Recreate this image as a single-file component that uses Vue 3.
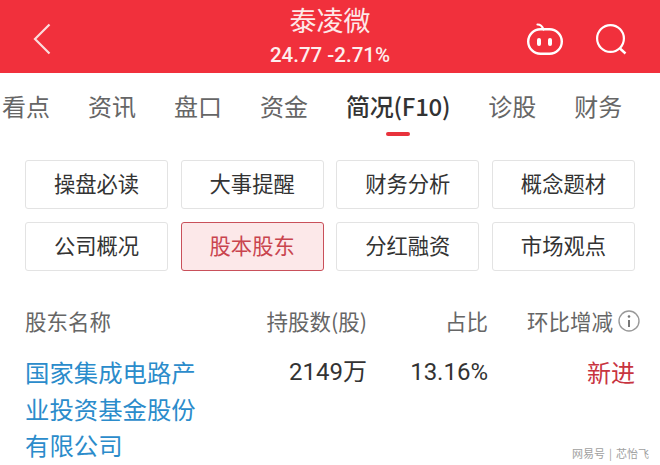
<script setup>
const tabs = [
  { label: '看点' },
  { label: '资讯' },
  { label: '盘口' },
  { label: '资金' },
  { label: '简况(F10)', active: true },
  { label: '诊股' },
  { label: '财务' }
];

const buttons = [
  { label: '操盘必读' },
  { label: '大事提醒' },
  { label: '财务分析' },
  { label: '概念题材' },
  { label: '公司概况' },
  { label: '股本股东', active: true },
  { label: '分红融资' },
  { label: '市场观点' }
];
</script>

<template>
  <div class="page">
    <header class="topbar">
      <div class="left">
        <svg class="back" width="18" height="32" viewBox="0 0 18 32" fill="none">
          <path d="M16.5 1.5 2 16l14.5 14.5" stroke="#fbdcdc" stroke-width="2.2" />
        </svg>
      </div>
      <div class="title">
        <div class="name">泰凌微</div>
        <div class="price">24.77 -2.71%</div>
      </div>
      <div class="right">
        <svg width="38" height="33" viewBox="0 0 38 33" fill="none">
          <path d="M12.5 1.5c3 0 5 2 6 5" stroke="#fff" stroke-width="2.2" stroke-linecap="round" />
          <rect x="3.2" y="6.2" width="33.6" height="24.6" rx="12.3" stroke="#fff" stroke-width="2.4" />
          <rect x="12" y="15" width="4" height="8" rx="2" fill="#fff" />
          <rect x="23" y="15" width="4" height="8" rx="2" fill="#fff" />
        </svg>
        <svg width="32" height="32" viewBox="0 0 32 32" fill="none">
          <circle cx="15.5" cy="14.5" r="13.4" stroke="#fff" stroke-width="2.2" />
          <path d="m25 24.5 5.5 5" stroke="#fff" stroke-width="2.4" />
        </svg>
      </div>
    </header>

    <nav class="tabs">
      <div v-for="tab in tabs" :key="tab.label" class="tab" :class="{ active: tab.active }">
        {{ tab.label }}
      </div>
    </nav>

    <section class="grid">
      <div v-for="btn in buttons" :key="btn.label" class="btn" :class="{ active: btn.active }">
        {{ btn.label }}
      </div>
    </section>

    <section class="table">
      <div class="row head">
        <div>股东名称</div>
        <div class="num">持股数(股)</div>
        <div class="num">占比</div>
        <div class="change">
          环比增减
          <svg width="22" height="22" viewBox="0 0 22 22" fill="none">
            <circle cx="11" cy="11" r="10" stroke="#999" stroke-width="1.4" />
            <circle cx="11" cy="6.5" r="1.3" fill="#777" />
            <path d="M11 10v7" stroke="#777" stroke-width="2" />
          </svg>
        </div>
      </div>
      <div class="row body">
        <a class="holder">国家集成电路产业投资基金股份有限公司</a>
        <div class="num val">2149万</div>
        <div class="num val">13.16%</div>
        <div class="status">新进</div>
      </div>
    </section>

    <div class="mark">网易号<span class="sep">|</span>芯怡飞</div>
  </div>
</template>

<style scoped>
.page {
  position: relative;
  width: 660px;
  height: 465px;
  overflow: hidden;
  background: #fff;
  font-family: "Noto Sans CJK SC", "Noto Sans", sans-serif;
}

.topbar {
  height: 73px;
  background: #f1303c;
  display: grid;
  grid-template-columns: 1fr auto 1fr;
  align-items: center;
  color: #fff;
}

.left {
  padding-left: 33px;
  display: flex;
  align-items: center;
  height: 100%;
}

.back {
  margin-top: 5px;
}

.title {
  align-self: start;
  text-align: center;
}

.name {
  font-size: 27px;
  line-height: 30px;
  margin-top: 5px;
  color: #fde8e8;
}

.price {
  font-family: Roboto, sans-serif;
  font-size: 20.5px;
  font-weight: 500;
  line-height: 24px;
  margin-top: 8px;
  color: #fdeeee;
}

.right {
  display: flex;
  justify-content: flex-end;
  align-items: flex-end;
  gap: 32px;
  padding-right: 33px;
  padding-bottom: 17px;
  height: 100%;
  box-sizing: border-box;
}

.tabs {
  display: flex;
  gap: 38px;
  height: 87px;
  padding-left: 2px;
  white-space: nowrap;
}

.tab {
  position: relative;
  font-size: 24px;
  line-height: 36px;
  padding-top: 15px;
  color: #666;
}

.tab.active {
  color: #333;
  font-weight: 500;
  letter-spacing: -0.25px;
}

.tab.active::after {
  content: '';
  position: absolute;
  left: 50%;
  top: 59px;
  width: 24px;
  height: 4px;
  margin-left: -12px;
  border-radius: 2px;
  background: #e8323c;
}

.grid {
  display: grid;
  grid-template-columns: repeat(4, 143px);
  grid-auto-rows: 49px;
  column-gap: 12.67px;
  row-gap: 13px;
  padding-left: 25px;
}

.btn {
  display: flex;
  align-items: center;
  justify-content: center;
  box-sizing: border-box;
  border: 1.5px solid #e3e3e3;
  border-radius: 3px;
  padding-bottom: 5px;
  font-size: 21.3px;
  color: #333;
}

.btn.active {
  border-color: #c9505a;
  background: #fce8e9;
  color: #c9444e;
}

.table {
  padding: 34px 25px 0;
}

.row {
  display: grid;
  grid-template-columns: 172px 170px 121px 147px;
}

.head {
  font-size: 21.5px;
  line-height: 32px;
  color: #666;
  align-items: center;
}

.num {
  text-align: right;
}

.change {
  display: flex;
  align-items: center;
  justify-content: flex-end;
  gap: 5px;
  margin-right: -5px;
  white-space: nowrap;
}

.body {
  margin-top: 17px;
}

.holder {
  font-size: 24.4px;
  line-height: 36.5px;
  color: #2b8ccb;
}

.val {
  font-family: Roboto, "Noto Sans CJK SC", sans-serif;
  font-size: 24px;
  line-height: 36.5px;
  color: #333;
}

.status {
  font-size: 24px;
  line-height: 36.5px;
  text-align: right;
  color: #c8343f;
}

.mark {
  position: absolute;
  right: 11px;
  bottom: 3px;
  font-size: 11px;
  line-height: 18px;
  color: #a0a0a0;
}

.sep {
  margin: 0 4px;
}
</style>
